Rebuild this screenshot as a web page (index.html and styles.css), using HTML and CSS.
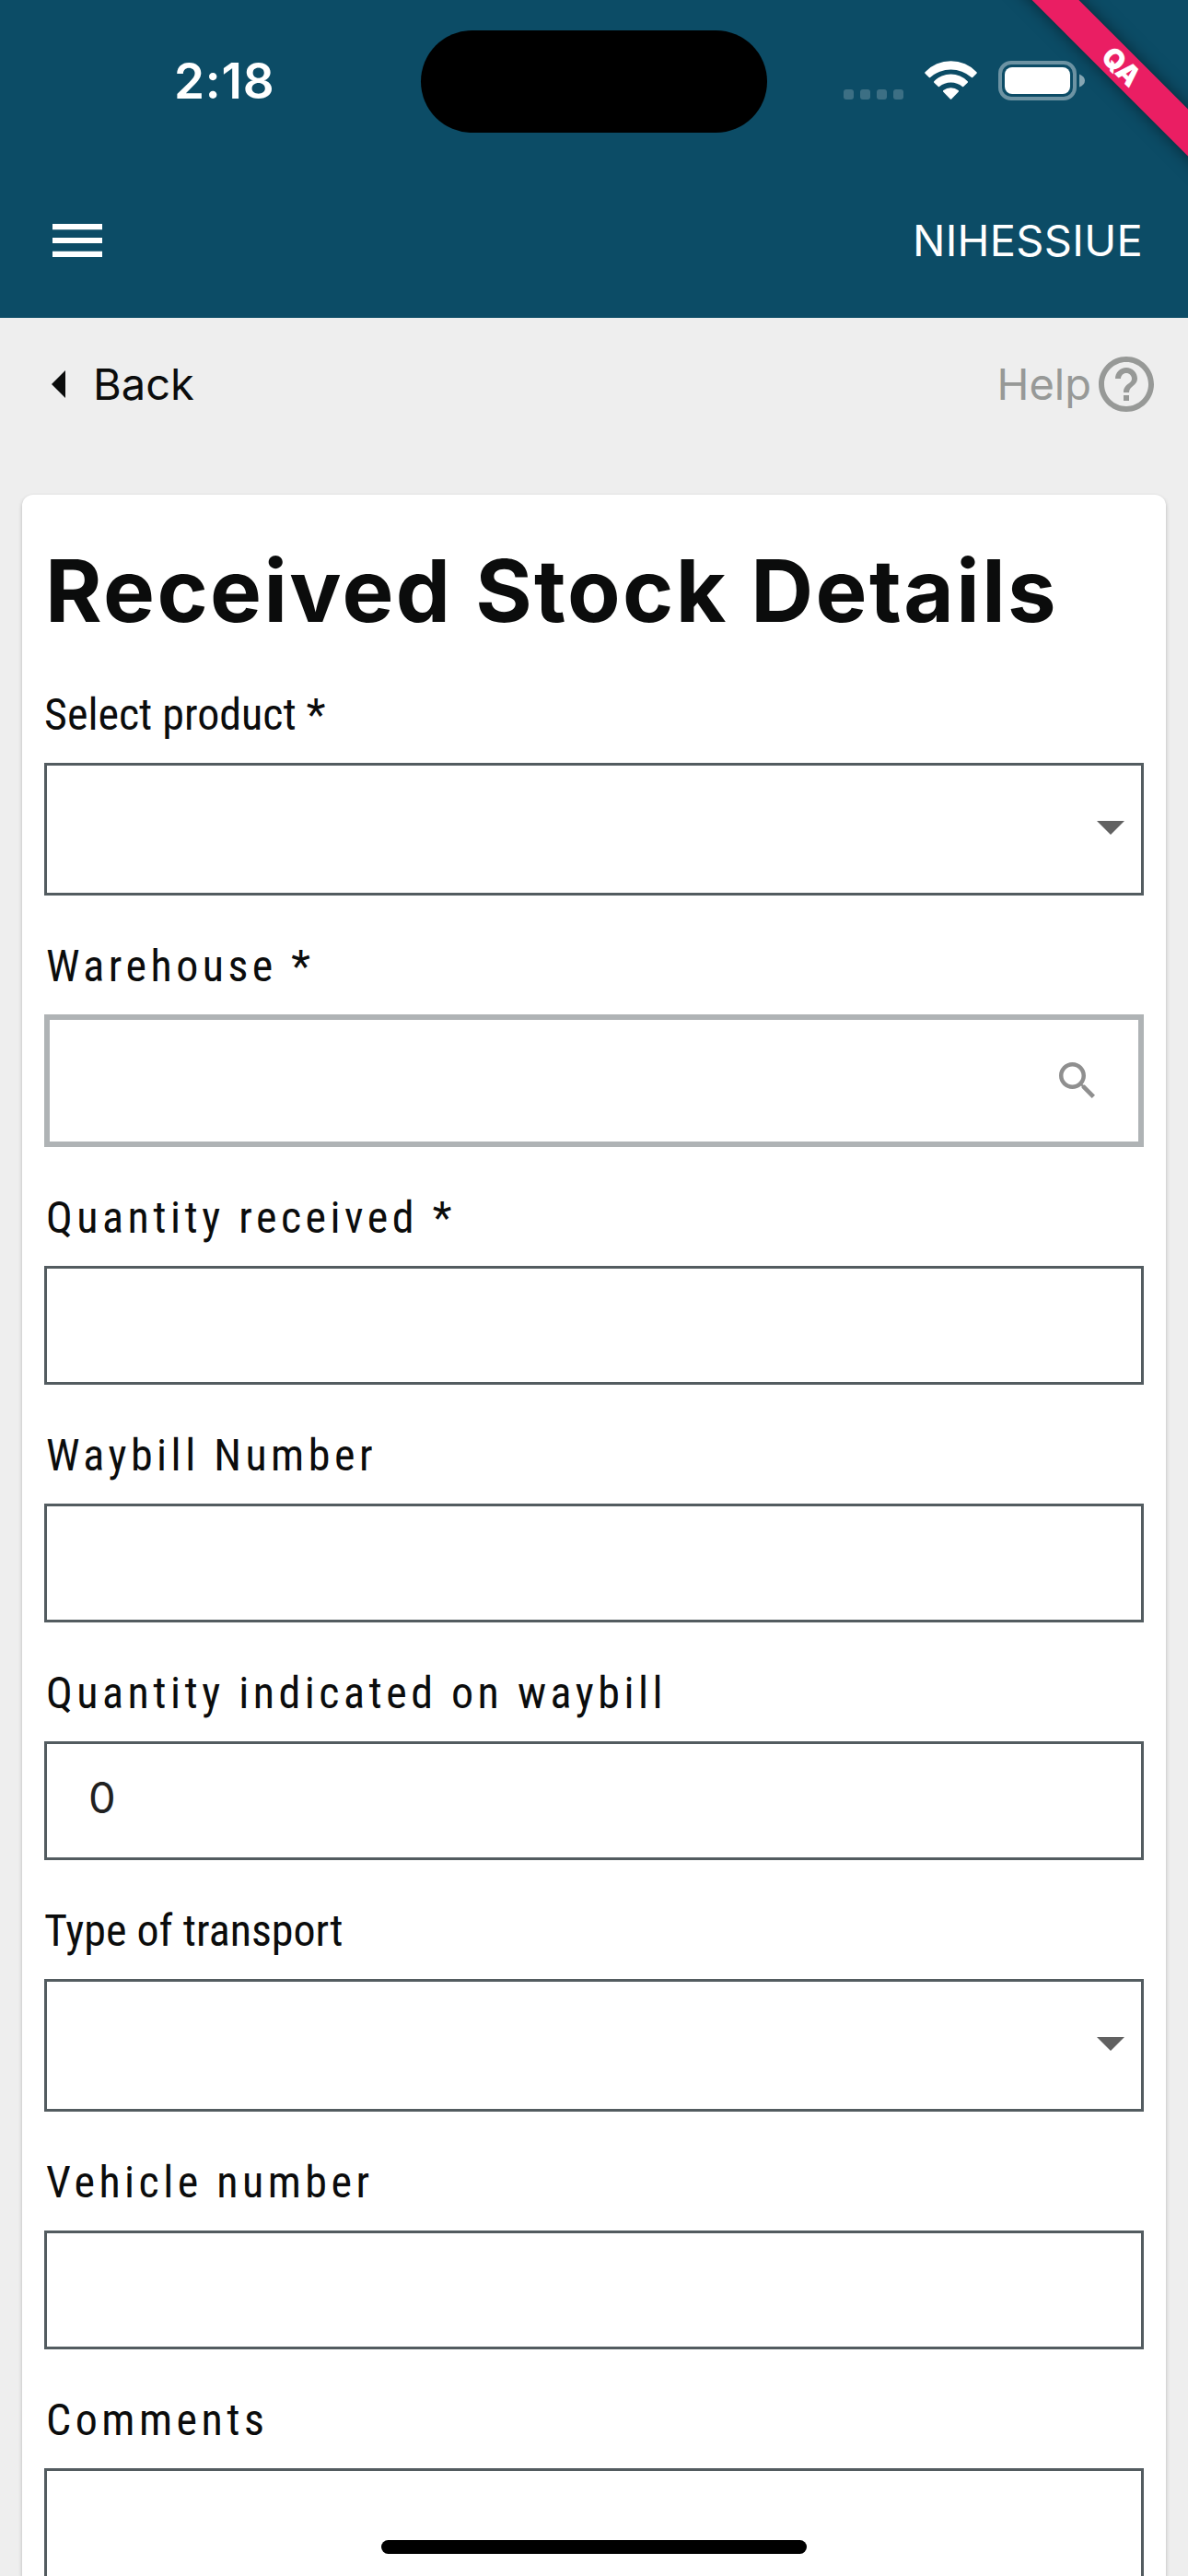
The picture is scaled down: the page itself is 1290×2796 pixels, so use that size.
FILE: index.html
```html
<!DOCTYPE html>
<html lang="en">
<head>
<meta charset="utf-8">
<title>Received Stock Details</title>
<link rel="stylesheet" href="styles.css">
</head>
<body>
<header class="header">
  <div class="status-bar">
    <div class="time">2:18</div>
    <div class="island"></div>
    <div class="indicators">
      <div class="signal"><i></i><i></i><i></i><i></i></div>
      <svg class="wifi" viewBox="0 0 57 42" fill="#fff">
        <path d="M.5 12.2A38.7 38.7 0 0 1 56.5 12.2Q57.2 13 56.5 13.7L52.2 18Q51.6 18.6 50.9 18A33.9 33.9 0 0 0 6.1 18Q5.4 18.6 4.8 18L.5 13.7Q-.2 13 .5 12.2Z"/>
        <path d="M10.3 22.2A25.5 25.5 0 0 1 46.7 22.2Q47.4 23 46.7 23.7L42.2 28.1Q41.6 28.6 41 28.1A19.6 19.6 0 0 0 16 28.1Q15.4 28.6 14.8 28.1L10.3 23.7Q9.6 23 10.3 22.2Z"/>
        <path d="M20.4 32.1A12.6 12.6 0 0 1 36.6 32.1Q37.4 32.9 36.7 33.7L29.2 41.5Q28.5 42.2 27.8 41.5L20.3 33.7Q19.6 32.9 20.4 32.1Z"/>
      </svg>
      <svg class="battery" viewBox="0 0 94 43">
        <rect x="2" y="2" width="81" height="39" rx="12" fill="none" stroke="#fff" stroke-opacity=".4" stroke-width="4"/>
        <rect x="7" y="7" width="71" height="29" rx="8" fill="#fff"/>
        <path d="M88 14.5Q94 17 94 21.5T88 28.5Z" fill="#fff" fill-opacity=".5"/>
      </svg>
    </div>
  </div>
  <div class="toolbar">
    <svg class="menu-icon" viewBox="0 0 54 36" fill="#fff"><path d="M0 0H54V6.2H0ZM0 15H54V21H0ZM0 29.8H54V36H0Z"/></svg>
    <div class="user">NIHESSIUE</div>
  </div>
  <div class="ribbon">QA</div>
</header>

<nav class="nav-row">
  <div class="back">
    <svg class="back-icon" viewBox="0 0 15 30"><path d="M15 0V30L0 15Z" fill="#0b0c0c"/></svg>
    <span>Back</span>
  </div>
  <div class="help">
    <span>Help</span>
    <svg class="help-icon" viewBox="2 2 20 20" fill="#979997"><path d="M11 18h2v-2h-2v2zm1-16C6.48 2 2 6.48 2 12s4.48 10 10 10 10-4.48 10-10S17.52 2 12 2zm0 18c-4.41 0-8-3.59-8-8s3.59-8 8-8 8 3.59 8 8-3.59 8-8 8zm0-14c-2.21 0-4 1.79-4 4h2c0-1.1.9-2 2-2s2 .9 2 2c0 2-3 1.75-3 5h2c0-2.25 3-2.5 3-5 0-2.21-1.79-4-4-4z"/></svg>
  </div>
</nav>

<main class="card">
  <h1 class="title">Received Stock Details</h1>
  <form class="form">
    <div class="field">
      <div class="label tight">Select product *</div>
      <div class="box select"><svg class="arrow" viewBox="0 0 30 15"><path d="M0 0H30L15 15Z" fill="#616161"/></svg></div>
    </div>
    <div class="field">
      <div class="label">Warehouse *</div>
      <div class="box search"><svg class="search-icon" viewBox="3 3 17.49 17.49" fill="#8f8f8f"><path d="M15.5 14h-.79l-.28-.27C15.41 12.59 16 11.11 16 9.5 16 5.91 13.09 3 9.5 3S3 5.91 3 9.5 5.91 16 9.5 16c1.61 0 3.09-.59 4.23-1.57l.27.28v.79l5 4.99L20.49 19l-4.99-5zm-6 0C7.01 14 5 11.99 5 9.5S7.01 5 9.5 5 14 7.01 14 9.5 11.99 14 9.5 14z"/></svg></div>
    </div>
    <div class="field">
      <div class="label">Quantity received *</div>
      <div class="box"></div>
    </div>
    <div class="field">
      <div class="label">Waybill Number</div>
      <div class="box"></div>
    </div>
    <div class="field">
      <div class="label">Quantity indicated on waybill</div>
      <div class="box">0</div>
    </div>
    <div class="field">
      <div class="label tight">Type of transport</div>
      <div class="box select"><svg class="arrow" viewBox="0 0 30 15"><path d="M0 0H30L15 15Z" fill="#616161"/></svg></div>
    </div>
    <div class="field">
      <div class="label">Vehicle number</div>
      <div class="box"></div>
    </div>
    <div class="field last">
      <div class="label">Comments</div>
      <div class="box area"></div>
    </div>
  </form>
</main>
<div class="home-indicator"></div>
</body>
</html>
```

FILE: styles.css
```css
* { box-sizing: border-box; }

body {
  position: relative;
  display: flex;
  flex-direction: column;
  margin: 0;
  width: 1290px;
  height: 2796px;
  overflow: hidden;
  background: #eeeeee;
  color: #0b0c0c;
  font-family: Inter, "Liberation Sans", sans-serif;
  font-size: 47px;
}

svg { display: block; flex: none; }

/* Header */
.header {
  position: relative;
  flex: none;
  height: 345px;
  overflow: hidden;
  background: #0c4c66;
  color: #fff;
}

.status-bar {
  display: grid;
  grid-template-columns: 457px 376px 457px;
  align-items: center;
  height: 177px;
}

.time {
  padding: 0 0 2px 189px;
  font-size: 53px;
  font-weight: 600;
  letter-spacing: 0.8px;
  line-height: 64px;
}

.island {
  height: 111px;
  border-radius: 56px;
  background: #000;
}

.indicators {
  display: flex;
  justify-content: flex-end;
  align-items: flex-end;
  padding: 0 112px 3px 0;
}

.signal {
  display: flex;
  gap: 7px;
  margin: 0 23px 1px 0;
}

.signal i {
  width: 11px;
  height: 11px;
  border-radius: 3px;
  background: rgba(255, 255, 255, 0.2);
}

.wifi { width: 57px; height: 42px; margin: 0 23px 1px 0; }
.battery { width: 94px; height: 43px; }

.toolbar {
  display: flex;
  justify-content: space-between;
  align-items: center;
  height: 168px;
  padding: 0 49px 0 57px;
}

.menu-icon { width: 54px; height: 36px; }
.user { padding-bottom: 2px; letter-spacing: 0.3px; }

.ribbon {
  position: absolute;
  top: 54px;
  left: 1018px;
  width: 400px;
  height: 36px;
  transform: rotate(45deg);
  background: #ea1e63;
  box-shadow: 0 0 18px rgba(0, 0, 0, 0.5);
  font-size: 30px;
  font-weight: 900;
  line-height: 36px;
  text-align: center;
}

/* Back / help row */
.nav-row {
  display: flex;
  flex: none;
  justify-content: space-between;
  align-items: center;
  height: 144px;
  padding: 0 37px 0 56px;
}

.nav-row span { padding-bottom: 2px; }
.back, .help { display: flex; align-items: center; }
.back { gap: 30px; }
.help { gap: 8px; color: #979997; }
.back-icon { width: 15px; height: 30px; }
.help-icon { width: 60px; height: 60px; }

/* Form card, running off the bottom of the screen */
.card {
  display: flex;
  flex: 1;
  flex-direction: column;
  min-height: 0;
  margin: 48px 24px 0;
  padding: 32px 24px 0;
  border-radius: 12px 12px 0 0;
  background: #fff;
  box-shadow: 0 2px 4px rgba(0, 0, 0, 0.24);
}

.title {
  margin: 0 0 10px 1px;
  font-size: 94px;
  font-weight: 700;
  letter-spacing: 2.4px;
  line-height: 144px;
  white-space: nowrap;
}

.form {
  display: flex;
  flex: 1;
  flex-direction: column;
  gap: 24px;
}

.field.last {
  display: flex;
  flex: 1;
  flex-direction: column;
}

.label {
  padding-left: 2px;
  font-family: "Roboto Condensed", Roboto, sans-serif;
  font-stretch: condensed;
  font-size: 48px;
  letter-spacing: 4.5px;
  line-height: 105px;
}

.label.tight { padding-left: 0; letter-spacing: 0; }

.box {
  display: flex;
  align-items: center;
  height: 129px;
  padding: 0 46px 8px 45px;
  border: 3px solid #535c60;
  color: #212121;
}

.box.select {
  justify-content: flex-end;
  height: 144px;
  padding: 0 18px 3px;
}

.box.search {
  justify-content: flex-end;
  height: 144px;
  padding: 0 47px 1px;
  border: 6px solid #afb3b5;
}

.box.area {
  flex: 1;
  height: auto;
  border-bottom: 0;
}

.arrow { width: 30px; height: 15px; }
.search-icon { width: 39px; height: 39px; }

.home-indicator {
  position: absolute;
  left: 414px;
  top: 2757px;
  width: 462px;
  height: 15px;
  border-radius: 8px;
  background: #000;
}
```
